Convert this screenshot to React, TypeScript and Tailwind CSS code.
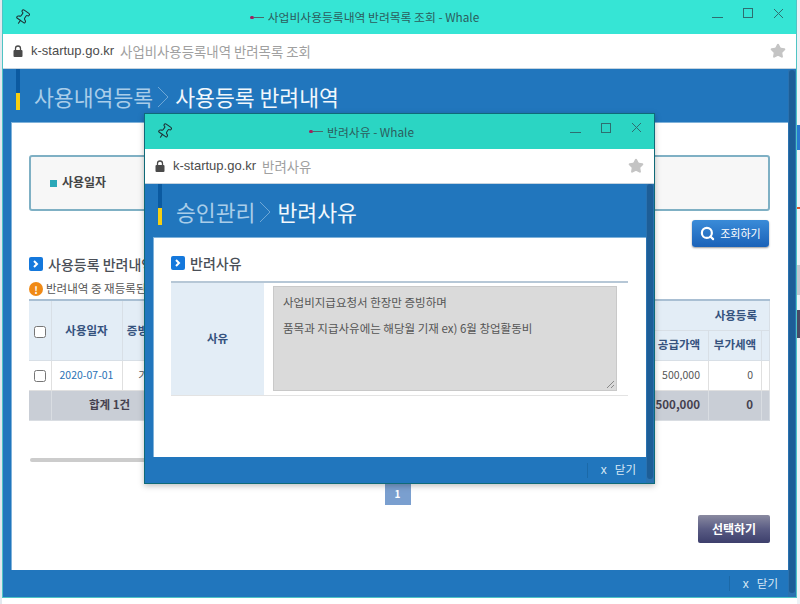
import { Pin, Search, Star } from "lucide-react";

const font = "font-['Noto_Sans_CJK_KR','Liberation_Sans',sans-serif]";

function LockIcon() {
  return (
    <svg width="10" height="12" viewBox="0 0 10 12" className="ml-[10px] shrink-0">
      <path d="M2.5 5V3.5a2.5 2.5 0 0 1 5 0V5" fill="none" stroke="#4a4a4a" strokeWidth="1.3" />
      <rect x="0.5" y="5" width="9" height="7" rx="1" fill="#4a4a4a" />
    </svg>
  );
}

function WindowBar({
  title,
  subtitle,
  teal,
  titleHeight,
  addressHeight,
  titlePad,
}: {
  title: string;
  subtitle: string;
  teal: string;
  titleHeight: string;
  addressHeight: string;
  titlePad: string;
}) {
  return (
    <>
      <div className={`flex items-center shrink-0 ${teal} ${titleHeight} text-[#2c5c5c]`}>
        <Pin size={17} className="ml-[11px] rotate-[35deg] text-[#1f2f33]" strokeWidth={1.5} />
        <div className={`flex-1 flex items-center justify-center text-[11.8px] gap-[4px] ${titlePad}`}>
          <span className="flex items-center w-[14px]">
            <span className="w-[4px] h-[3px] rounded-full bg-[#a0205f]" />
            <span className="flex-1 h-px bg-[#4a6a6a]" />
          </span>
          <span>{title}</span>
        </div>
        <div className="flex items-center gap-[20px] mr-[12px] mb-[8px] text-[#2e6e70]">
          <span className="w-[11px] h-px bg-[#2e6e70] mt-[9px]" />
          <span className="w-[10px] h-[10px] border border-[#2e6e70]" />
          <svg width="11" height="11" viewBox="0 0 11 11" stroke="#2e6e70" fill="none">
            <path d="M1 1l9 9M10 1l-9 9" />
          </svg>
        </div>
      </div>
      <div className={`flex items-center shrink-0 bg-white border-b border-[#c5d3df] ${addressHeight}`}>
        <LockIcon />
        <span className="ml-[8px] text-[#4c4c4c] font-['Liberation_Sans',sans-serif] text-[13px]">k-startup.go.kr</span>
        <span className="ml-[6px] text-[#a0a0a0] text-[13.4px]">{subtitle}</span>
        <Star size={16} className="ml-auto mr-[10px] text-[#c4c4c4]" fill="#c4c4c4" />
      </div>
    </>
  );
}

function PageHeading({ parent, current }: { parent: string; current: string }) {
  return (
    <div className="flex items-center shrink-0 h-[53px]">
      <div className="ml-[13px] w-[4px] h-[41px] flex flex-col self-start">
        <div className="flex-1 bg-[#0b5aa0]" />
        <div className="h-[17px] bg-[#f6cf12]" />
      </div>
      <div className="flex items-center pt-[4px]">
        <span className="ml-[14px] text-[21.6px] text-[#a9cde9]">{parent}</span>
        <svg width="14" height="22" viewBox="0 0 14 22" fill="none" stroke="#6ea7d6" className="ml-[3px] mr-[5px]">
          <path d="M2 1l10 10L2 21" />
        </svg>
        <span className="text-[21.6px] text-[#f2f8fc]">{current}</span>
      </div>
    </div>
  );
}

function SectionTitle({ children }: { children: string }) {
  return (
    <div className="flex items-center gap-[5px]">
      <span className="w-[14px] h-[14px] rounded-[2px] bg-[#1478dc] flex items-center justify-center">
        <svg width="6" height="8" viewBox="0 0 6 8" fill="none" stroke="white" strokeWidth="2">
          <path d="M1 1l3 3-3 3" />
        </svg>
      </span>
      <span className="text-[14px] font-medium text-[#4a4f57] leading-none">{children}</span>
    </div>
  );
}

function CloseBar({ height, pad }: { height: string; pad: string }) {
  return (
    <div className={`flex items-center justify-end shrink-0 ${height} ${pad} text-[#d9e9f5] text-[11.5px]`}>
      <span className="h-[15px] border-l border-[#1b69a8] pl-[13px] flex items-center gap-[8px]">
        <span className="font-['Liberation_Sans',sans-serif] text-[12px]">x</span> 닫기
      </span>
    </div>
  );
}

function Scrollbar() {
  return (
    <div className="absolute right-0 bottom-0 top-[70px] w-[8px] bg-[#2a72b0] px-[1px] pb-[4px]">
      <div className="w-full h-full rounded-full bg-[#1d5e97]" />
    </div>
  );
}

const th = "border-r border-b border-[#d8dfe6] bg-[#e3edf6] text-[#35527e] font-bold text-[11.5px]";
const td = "border-r border-b border-[#e0e0e0] text-[10.5px]";
const tf = "border-r border-b border-[#d9dde2] bg-[#c9ced6] text-[#45414f] font-bold text-[11.5px]";

function ExpenseTable() {
  return (
    <table className="w-[741px] table-fixed border-collapse border-t-2 border-[#a9bfd3]">
      <colgroup>
        <col className="w-[22px]" />
        <col className="w-[71px]" />
        <col className="w-[52px]" />
        <col />
        <col className="w-[59px]" />
        <col className="w-[53px]" />
        <col className="w-[8px]" />
      </colgroup>
      <tbody>
        <tr className="h-[30px]">
          <th rowSpan={2} className={th}>
            <input type="checkbox" className="w-[12px] h-[12px] align-middle" readOnly />
          </th>
          <th rowSpan={2} className={th}>사용일자</th>
          <th rowSpan={2} className={th}>증빙유형</th>
          <th className={th} />
          <th colSpan={3} className={`${th} pr-[12px] text-right`}>사용등록</th>
        </tr>
        <tr className="h-[30px]">
          <th className={th} />
          <th className={th}>공급가액</th>
          <th className={th}>부가세액</th>
          <th className={th} />
        </tr>
        <tr className="h-[30px]">
          <td className={`${td} text-center`}>
            <input type="checkbox" className="w-[12px] h-[12px] align-middle" readOnly />
          </td>
          <td className={`${td} text-center text-[#2a72b5]`}>2020-07-01</td>
          <td className={`${td} text-center text-[#555]`}>기타</td>
          <td className={td} />
          <td className={`${td} text-right pr-[8px] text-[#555]`}>500,000</td>
          <td className={`${td} text-right pr-[8px] text-[#555]`}>0</td>
          <td className={td} />
        </tr>
        <tr className="h-[30px]">
          <td className={tf} />
          <td colSpan={2} className={`${tf} text-center pr-[6px]`}>합계 1건</td>
          <td className={tf} />
          <td className={`${tf} text-right pr-[8px]`}>500,000</td>
          <td className={`${tf} text-right pr-[8px]`}>0</td>
          <td className={tf} />
        </tr>
      </tbody>
    </table>
  );
}

function ReasonPopup() {
  return (
    <div className="absolute left-[144px] top-[113px] w-[511px] h-[371px] flex flex-col bg-[#2176bd] border border-[#0f6a78] shadow-[0_2px_6px_rgba(0,0,0,0.25)]">
      <WindowBar
        title="반려사유 - Whale"
        subtitle="반려사유"
        teal="bg-[#2bd5c3]"
        titleHeight="h-[35px]"
        addressHeight="h-[35px]"
        titlePad="pr-[20px]"
      />
      <PageHeading parent="승인관리" current="반려사유" />
      <div className="ml-[8px] mr-[8px] flex-1 bg-white border-t border-l border-[#7fb2da] pl-[17px] pr-[18px] pt-[18px]">
        <SectionTitle>반려사유</SectionTitle>
        <div className="mt-[11px] flex h-[115px] border-t-2 border-b border-t-[#b6c7d6] border-b-[#e3e3e3]">
          <div className="w-[93px] shrink-0 bg-[#e3edf6] flex items-center justify-center text-[11.5px] font-bold text-[#35527e]">
            사유
          </div>
          <div className="flex-1 pl-[9px] pt-[3px]">
            <div className="relative w-[344px] h-[105px] bg-[#dadada] border border-[#c9c9c9] px-[9px] py-[7px] text-[11.5px] text-[#555] leading-[16px]">
              <p>사업비지급요청서 한장만 증빙하며</p>
              <p className="mt-[10px]">품목과 지급사유에는 해당월 기재 ex) 6월 창업활동비</p>
              <svg width="9" height="9" viewBox="0 0 9 9" stroke="#888" className="absolute right-[1px] bottom-[1px]">
                <path d="M1 8l7-7M5 8l3-3" />
              </svg>
            </div>
          </div>
        </div>
      </div>
      <CloseBar height="h-[26px]" pad="pr-[18px]" />
      <Scrollbar />
    </div>
  );
}

function DesktopEdge() {
  return (
    <div className="absolute right-0 top-0 w-[3px] h-full flex flex-col bg-[#eef2f6]">
      <div className="h-[125px]" />
      <div className="h-[25px] bg-[#2a7ad0]" />
      <div className="h-[57px]" />
      <div className="h-[2px] bg-[#e0552a]" />
      <div className="h-[56px]" />
      <div className="h-[30px] bg-[#c4c8d0]" />
      <div className="h-[15px]" />
      <div className="h-[28px] bg-[#4a4a64]" />
    </div>
  );
}

export default function App() {
  return (
    <div className={`relative w-[800px] h-[604px] overflow-hidden bg-white ${font}`}>
      <div className="absolute left-0 top-0 w-[2px] h-full bg-[#e2e8ee]" />
      <DesktopEdge />

      <div className="absolute left-[2px] top-0 w-[795px] h-[598px] flex flex-col bg-[#2176bd] border-x border-b border-[#4fc4c4]">
        <WindowBar
          title="사업비사용등록내역 반려목록 조회 - Whale"
          subtitle="사업비사용등록내역 반려목록 조회"
          teal="bg-[#36e5d5]"
          titleHeight="h-[34px]"
          addressHeight="h-[35px]"
          titlePad="pr-[14px]"
        />
        <PageHeading parent="사용내역등록" current="사용등록 반려내역" />
        <div className="ml-[8px] mr-[8px] flex-1 bg-white border-t border-l border-[#7fb2da] px-[17px] pt-[32px]">
          <div className="h-[56px] w-[741px] rounded-[3px] border-2 border-[#7fb0c4] bg-[#f7f7f7] flex items-center pl-[19px] gap-[5px]">
            <span className="w-[7px] h-[7px] bg-[#2ba8b8]" />
            <span className="text-[12px] font-bold text-[#444] mb-[3px]">사용일자</span>
          </div>
          <div className="flex justify-end mt-[9px] w-[740px]">
            <button className="w-[77px] h-[27px] rounded-[3px] bg-gradient-to-b from-[#3a8bd8] to-[#1a62b8] text-white text-[11px] flex items-center justify-center gap-[5px] shadow-[0_1px_2px_rgba(0,0,0,0.4)]">
              <Search size={15} strokeWidth={3.5} />
              조회하기
            </button>
          </div>
          <div className="mt-[10px]">
            <SectionTitle>사용등록 반려내역</SectionTitle>
          </div>
          <div className="mt-[11px] mb-[3px] flex items-center gap-[3px] text-[11.5px] text-[#555] h-[14px]">
            <span className="w-[14px] h-[14px] rounded-full bg-[#f08a16] text-white text-[10px] font-bold flex items-center justify-center">!</span>
            반려내역 중 재등록된 건은 목록에서 제외됩니다
          </div>
          <ExpenseTable />
          <div className="mt-[37px] ml-[1px] w-[400px] h-[4px] rounded-full bg-[#cccccc]" />
          <div className="mt-[20px] w-[737px] flex justify-center">
            <span className="w-[26px] h-[23px] bg-[#7a9fcf] text-white text-[10px] font-bold flex items-center justify-center">1</span>
          </div>
          <div className="mt-[10px] w-[741px] flex justify-end">
            <button className="w-[72px] h-[28px] rounded-[2px] bg-gradient-to-b from-[#8a8aa0] via-[#5a5c84] to-[#3d3f6c] text-white text-[12px] font-bold">
              선택하기
            </button>
          </div>
        </div>
        <CloseBar height="h-[27px]" pad="pr-[18px]" />
        <Scrollbar />
      </div>

      <ReasonPopup />
    </div>
  );
}
